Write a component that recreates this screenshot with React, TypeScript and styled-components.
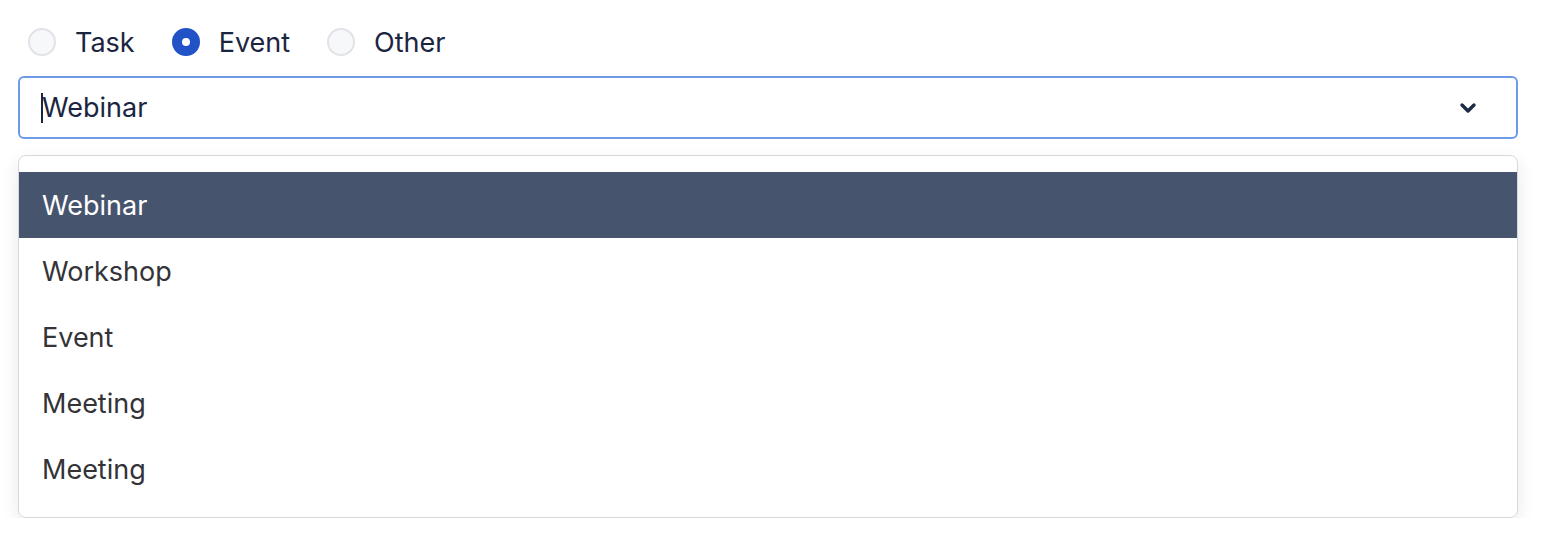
import React, { useState } from 'react';
import styled, { createGlobalStyle } from 'styled-components';

const GlobalStyle = createGlobalStyle`
  body {
    margin: 0;
    background: #ffffff;
    font-family: Inter, "Noto Sans", "Liberation Sans", sans-serif;
  }
`;

const KINDS = ['Task', 'Event', 'Other'];
const OPTIONS = ['Webinar', 'Workshop', 'Event', 'Meeting', 'Meeting'];

const ChevronDown: React.FC = () => (
  <svg width="18" height="12" viewBox="0 0 18 12" fill="none">
    <path d="M3 3l6 6 6-6" stroke="#1f2a44" strokeWidth="3.4" strokeLinecap="round" strokeLinejoin="round" />
  </svg>
);

export default function App() {
  const [kind, setKind] = useState('Event');
  const [value] = useState('Webinar');

  return (
    <Page>
      <GlobalStyle />
      <RadioGroup>
        {KINDS.map((k) => (
          <RadioLabel key={k} onClick={() => setKind(k)}>
            <RadioDot $checked={kind === k} />
            {k}
          </RadioLabel>
        ))}
      </RadioGroup>
      <Field>
        <Caret />
        <FieldValue>{value}</FieldValue>
        <ChevronDown />
      </Field>
      <Menu>
        {OPTIONS.map((o, i) => (
          <MenuItem key={i} $active={i === 0}>
            {o}
          </MenuItem>
        ))}
      </Menu>
    </Page>
  );
}

const Page = styled.div`
  padding: 27px 24px 0 18px;
  display: flex;
  flex-direction: column;
`;

const RadioGroup = styled.div`
  display: flex;
  align-items: center;
  gap: 37px;
  padding-left: 10px;
  height: 30px;
`;

const RadioLabel = styled.label`
  display: flex;
  align-items: center;
  gap: 19px;
  font-size: 27px;
  color: #1c2540;
  cursor: pointer;
`;

const RadioDot = styled.span<{ $checked: boolean }>`
  box-sizing: border-box;
  width: 28px;
  height: 28px;
  border-radius: 50%;
  background: ${(p) => (p.$checked ? '#ffffff' : '#f7f8fa')};
  border: ${(p) => (p.$checked ? '10px solid #2152c6' : '2.5px solid #e1e3e8')};
`;

const Field = styled.div`
  box-sizing: border-box;
  margin-top: 19px;
  height: 63px;
  border: 2px solid #6d9be6;
  border-radius: 6px;
  display: flex;
  align-items: center;
  padding: 0 39px 0 21px;
`;

const Caret = styled.span`
  width: 2px;
  height: 30px;
  background: #1c2540;
  margin-right: -1px;
`;

const FieldValue = styled.span`
  flex: 1;
  font-size: 27px;
  color: #1c2540;
`;

const Menu = styled.div`
  margin-top: 16px;
  border: 1.5px solid #d6d8db;
  border-radius: 8px;
  padding: 16px 0 15px;
  box-shadow: 0 6px 18px rgba(0, 0, 0, 0.09);
  display: flex;
  flex-direction: column;
`;

const MenuItem = styled.div<{ $active: boolean }>`
  height: 66px;
  display: flex;
  align-items: center;
  padding-left: 23px;
  font-size: 27px;
  color: ${(p) => (p.$active ? '#ffffff' : '#333338')};
  background: ${(p) => (p.$active ? '#46546e' : 'transparent')};
`;
